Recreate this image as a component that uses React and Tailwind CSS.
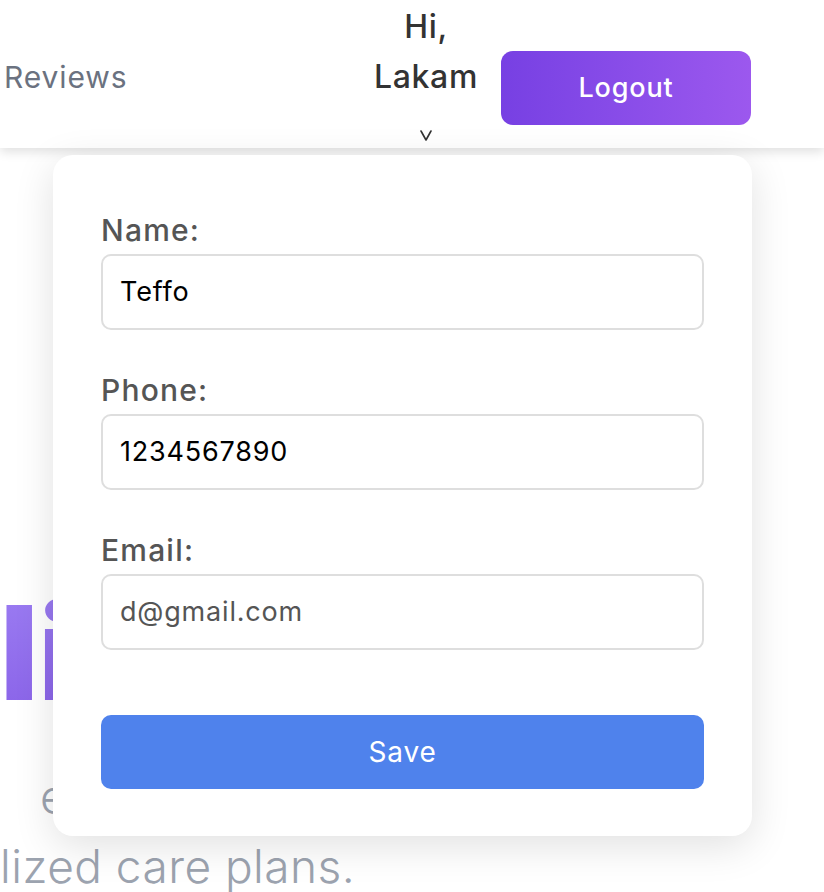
import React from 'react';

const font = { fontFamily: 'Inter, "Noto Sans", sans-serif' };

function Field({ label, value, valueClass }) {
  return (
    <div className="flex flex-col">
      <label className="text-[30px] leading-[40px] font-medium tracking-[0.04em] text-[#555555]">{label}</label>
      <div className="mt-1 h-[76px] flex items-center rounded-[10px] border-2 border-[#dedede] px-[17px] text-[27px] tracking-[0.03em]">
        <span className={valueClass}>{value}</span>
      </div>
    </div>
  );
}

export default function App() {
  return (
    <div className="relative min-h-[892px] w-[824px] overflow-hidden bg-white" style={font}>
      {/* Header */}
      <header className="relative z-10 flex h-[148px] items-start bg-white shadow-[0_4px_10px_rgba(0,0,0,0.12)]">
        <a className="ml-1 mt-[55px] text-[30px] leading-[44px] tracking-[0.03em] text-[#6b7280]">Reviews</a>
        <div className="ml-auto flex flex-col items-center pt-[2px] text-[32px] leading-[50px] font-medium tracking-[0.02em] text-[#333333]">
          <span>Hi,</span>
          <span>Lakam</span>
          {/* caret */}
          <svg className="mt-[28px] h-[11px] w-[12px]" viewBox="0 0 12 11" fill="none">
            <polyline points="1,1 6,10 11,1" stroke="#333333" strokeWidth="1.6" strokeLinecap="round" strokeLinejoin="round" />
          </svg>
        </div>
        <button className="ml-[23px] mr-[73px] mt-[51px] flex h-[74px] w-[250px] items-center justify-center rounded-[12px] bg-gradient-to-r from-[#7740e3] to-[#9c58ee] text-[27px] font-medium tracking-[0.03em] text-white">
          Logout
        </button>
      </header>

      {/* Hero behind dropdown */}
      <section className="pt-[440px]">
        <h1 className="w-fit bg-gradient-to-b from-[#9b7cf2] to-[#8a63e8] bg-clip-text text-[130px] leading-[130px] font-black text-transparent">
          lifecare
        </h1>
        <p className="mt-[43px] text-[46px] leading-[70px] font-light tracking-[0.01em] text-[#9ca3af]">
          <span className="block pl-[40px]">expert doctors</span>
          <span className="block">lized care plans.</span>
        </p>
      </section>

      {/* Profile dropdown */}
      <div className="absolute left-[53px] top-[155px] z-20 w-[699px] rounded-[20px] bg-white px-[48px] pt-[55px] pb-[47px] shadow-[0_10px_40px_rgba(0,0,0,0.12)]">
        <div className="flex flex-col gap-[40px]">
          <Field label="Name:" value="Teffo" valueClass="text-black" />
          <Field label="Phone:" value="1234567890" valueClass="text-black" />
          <Field label="Email:" value="d@gmail.com" valueClass="text-[#555555]" />
        </div>
        <button className="mt-[65px] flex h-[74px] w-full items-center justify-center rounded-[10px] bg-[#4f82ec] text-[28px] tracking-[0.03em] text-white">
          Save
        </button>
      </div>
    </div>
  );
}
